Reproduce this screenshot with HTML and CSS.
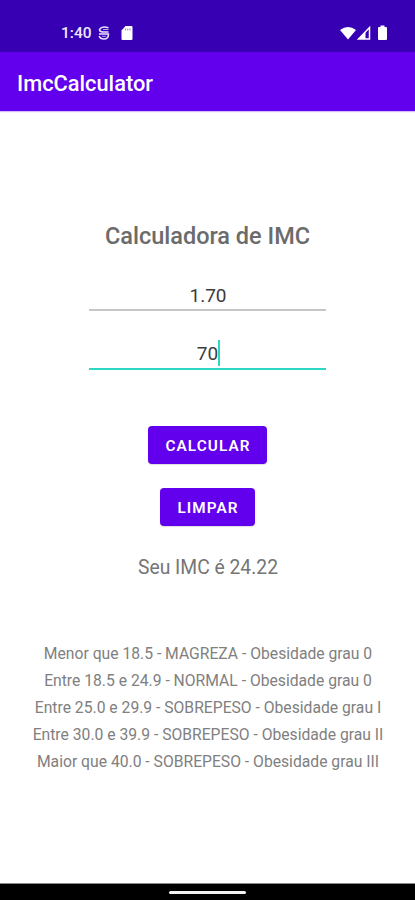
FILE: index.html
```html
<!DOCTYPE html>
<html lang="pt">
<head>
<meta charset="utf-8">
<title>ImcCalculator</title>
<link rel="stylesheet" href="styles.css">
</head>
<body>
<div class="screen">
  <div class="status">
    <span class="time">1:40</span>
    <svg class="debug" width="12" height="14" viewBox="0 0 12 14"><path d="M10.500 2Q9 1 6 1T1.500 3.500Q1.500 6 5 6H10.500M1 8H10.500Q10.500 13 6 13Q2 13 1.200 10" fill="none" stroke="#e9e2ff" stroke-width="1.500"/><path d="M5 3.500h5.500M4 10.300h4" stroke="#b9a8e8"/></svg>
    <svg class="card" width="12" height="14" viewBox="0 0 12 14"><path d="M4.500 0H10.500q1 0 1 1v12q0 1-1 1H1.500q-1 0-1-1V4.500z" fill="#fff"/><path d="M4.500 2.500v2M6.800 2.500v2M9 2.500v2" stroke="#9a80da" stroke-width="1"/></svg>
    <span class="grow"></span>
    <svg width="48" height="16" viewBox="0 0 48 16"><path d="M0 5Q8 -1 16 5L8 14.500z" fill="#fff"/><path d="M29.500 2.500v11.500H18.500z" fill="none" stroke="#fff" stroke-width="1.500"/><path d="M25.500 7v7h-7z" fill="#fff"/><path d="M38 3q0-1 1-1h1.500V.500h4V2H46q1 0 1 1v11q0 1-1 1h-7q-1 0-1-1z" fill="#fff"/></svg>
  </div>
  <header class="bar">ImcCalculator</header>
  <main class="main">
    <h1 class="title">Calculadora de IMC</h1>
    <div class="field"><span>1.70</span></div>
    <div class="field active"><span>70</span><i class="caret"></i></div>
    <button class="btn calc">CALCULAR</button>
    <button class="btn clear">LIMPAR</button>
    <p class="result">Seu IMC é 24.22</p>
    <div class="table">
      <p>Menor que 18.5 - MAGREZA - Obesidade grau 0</p>
      <p>Entre 18.5 e 24.9 - NORMAL - Obesidade grau 0</p>
      <p>Entre 25.0 e 29.9 - SOBREPESO - Obesidade grau I</p>
      <p>Entre 30.0 e 39.9 - SOBREPESO - Obesidade grau II</p>
      <p>Maior que 40.0 - SOBREPESO - Obesidade grau III</p>
    </div>
  </main>
  <footer class="nav"><div class="pill"></div></footer>
</div>
</body>
</html>
```
FILE: styles.css
```css
* { box-sizing: border-box; margin: 0; padding: 0; }
body { font-family: Roboto, sans-serif; background: #fff; }
.screen { width: 415px; height: 900px; display: flex; flex-direction: column; overflow: hidden; }
.status { height: 52px; background: #3700b3; color: #fff; display: flex; align-items: center; padding: 13px 27px 0 61px; }
.time { font-size: 15.500px; font-weight: 500; line-height: 18px; width: 37px; color: #eee9ff; }
.card { margin-left: 11px; }
.grow { flex: 1; }
.bar { height: 59px; background: #6200ee; color: #fff; padding: 0 17px; font-size: 21.800px; font-weight: 500; line-height: 63px; box-shadow: 0 1px 1px #6200ee44; }
.main { flex: 1; display: flex; flex-direction: column; align-items: center; }
.title { margin-top: 110px; font-size: 23.500px; line-height: 30px; font-weight: 500; color: #6b6b6b; }
.field { width: 237px; height: 33px; margin-top: 27px; padding: 4px 0 0 1px; border-bottom: 2px solid #c8c5c8; display: flex; justify-content: center; align-items: center; font-size: 19px; color: #3c3c3c; }
.active { margin-top: 26px; padding: 2px 0 0 2px; border-color: #2bd9c3; }
.caret { width: 2px; height: 26px; margin-top: -2px; background: #2bd9c3; }
.btn { border: 0; border-radius: 4px; background: #6200ee; color: #fff; font-family: inherit; font-size: 15.300px; font-weight: 600; letter-spacing: 1.100px; height: 38px; padding: 2px 0 0 1px; box-shadow: 0 1px 1px #0002; }
.calc { width: 119px; margin-top: 56px; }
.clear { width: 95px; margin-top: 24px; }
.result { margin-top: 30px; padding-left: 1px; font-size: 19.300px; line-height: 24px; color: #757575; }
.table { margin-top: 60px; padding-left: 1px; text-align: center; color: #808080; font-size: 15.700px; line-height: 27px; white-space: nowrap; }
.nav { height: 17px; background: #000; border-top: 1px solid #888; display: flex; justify-content: center; align-items: center; padding-top: 1px; }
.pill { width: 77px; height: 3px; border-radius: 2px; background: #f4f4f4; }
```
